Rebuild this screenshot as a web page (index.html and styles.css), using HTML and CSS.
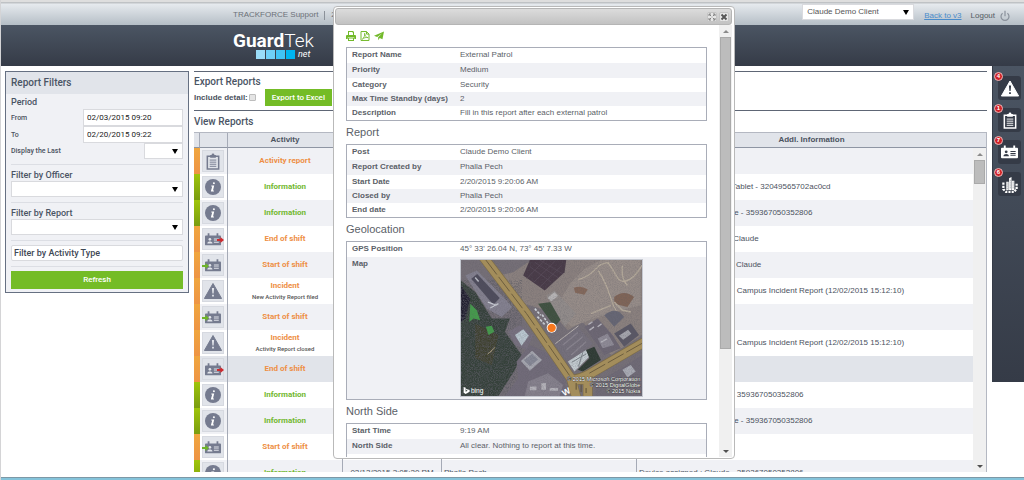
FILE: index.html
```
<!DOCTYPE html>
<html lang="en">
<head>
<meta charset="UTF-8">
<title>GuardTek.net - Reports</title>
<link rel="stylesheet" href="styles.css">
</head>
<body>

<!-- icons -->
<svg class="defs" aria-hidden="true">
	<symbol id="i-clip" viewBox="0 0 16 18">
		<path d="M2 3.5h12V17H2z" fill="none" stroke="currentColor" stroke-width="1.6"/>
		<path d="M5 2h1.5a1.5 1.5 0 0 1 3 0H11v3H5z" fill="currentColor"/>
		<path d="M4.5 7.5h7M4.5 9.7h7M4.5 11.9h7M4.5 14.1h7" stroke="currentColor"/>
	</symbol>
	<symbol id="i-info" viewBox="0 0 16 16">
		<circle cx="8" cy="8" r="8" fill="currentColor"/>
		<path d="M9.1 3.2a1 1 0 1 1-.6 1.9 1 1 0 0 1 .6-1.9zM6.4 6.6h2.8l-1.2 5h1l-.1.8H5.9l.1-.7 1.2-4.2h-1z" fill="#fff"/>
	</symbol>
	<symbol id="i-warn" viewBox="0 0 18 16">
		<path d="M9 .5 17.6 15.5H.4z" fill="currentColor" stroke="currentColor" stroke-linejoin="round"/>
		<path class="cut" d="M7.9 5h2.2l-.5 5.6H8.4zM8.1 11.8h1.8v1.8H8.1z"/>
	</symbol>
	<symbol id="i-card" viewBox="0 0 18 14">
		<path d="M1 2.500h16a1 1 0 0 1 1 1v9a1 1 0 0 1-1 1H1a1 1 0 0 1-1-1v-9a1 1 0 0 1 1-1z" fill="currentColor"/>
		<path d="M3 0h2v4H3zM13 0h2v4h-2z" fill="currentColor"/>
		<circle class="cut" cx="5.5" cy="6.800" r="1.500"/>
		<path class="cut" d="M2.600 11.400c0-3 5.800-3 5.800 0zM10 6h5.500v1H10zM10 8h5.500v1H10zM10 10h5.500v1H10z"/>
	</symbol>
	<symbol id="i-out" viewBox="0 0 7 6">
		<path d="M0 2h3.4V0L7 3 3.400 6V4H0z" fill="currentColor"/>
	</symbol>
	<symbol id="i-city" viewBox="0 0 18 18">
		<path d="M5 6h2.600v9H5zM8 2.500 10.600 1v14H8zM11 5h2.600v10H11z" fill="currentColor"/>
		<path d="M6 7v7M9.300 4v10M12.300 6v8" stroke="#383f4a" stroke-width=".6" stroke-dasharray="1"/>
		<path d="M2 7v7l3 3h8l3-3V7" fill="none" stroke="currentColor" stroke-width="2.400" stroke-dasharray="2.200 1.200"/>
	</symbol>
</svg>

<header class="topbar">
	<div class="account">
		<span>TRACKFORCE Support</span>
		<span class="sep"></span>
		<span>2/20/2015</span>
	</div>
	<select class="client" aria-label="Client"><option>Claude Demo Client</option></select>
	<a class="back" href="#">Back to v3</a>
	<a class="logout" href="#">Logout
		<svg viewBox="0 0 10 12"><path d="M2.600 3.200a4 4 0 1 0 4.800 0M5 .8v5.400" fill="none" stroke="#8a919b" stroke-width="1.200"/></svg>
	</a>
</header>

<div class="brand">
	<div class="logo">
		<div class="logo-name"><b>Guard</b>Tek</div>
		<div class="logo-sub"><i class="sq1"></i><i class="sq2"></i><i class="sq3"></i><i class="sq4"></i><em>net</em></div>
	</div>
</div>

<div class="page">
	<form class="filters">
		<h2>Report Filters</h2>
		<div class="fields">
			<h3>Period</h3>
			<div class="row"><label for="from">From</label><input type="text" id="from" value="02/03/2015 09:20"></div>
			<div class="row"><label for="to">To</label><input type="text" id="to" value="02/20/2015 09:22"></div>
			<div class="row"><label for="last">Display the Last</label><select id="last"><option></option></select></div>
			<hr>
			<label class="title" for="officer">Filter by Officer</label>
			<select id="officer"><option></option></select>
			<hr>
			<label class="title" for="report">Filter by Report</label>
			<select id="report"><option></option></select>
			<hr>
			<input type="text" class="type" aria-label="Filter by Activity Type" value="Filter by Activity Type">
			<hr>
			<button type="button" class="green">Refresh</button>
		</div>
	</form>

	<main class="reports">
		<section class="export">
			<h2>Export Reports</h2>
			<div class="export-row">
				<label for="detail">Include detail:</label>
				<input type="checkbox" id="detail">
				<button type="button" class="green">Export to Excel</button>
			</div>
		</section>
		<h2 class="view">View Reports</h2>
		<div class="grid">
			<table>
				<colgroup><col class="c-bar"><col class="c-icon"><col class="c-act"><col class="c-date"><col class="c-who"><col></colgroup>
				<thead>
					<tr><th></th><th></th><th>Activity</th><th>Date</th><th>Officer</th><th>Addl. Information</th></tr>
				</thead>
				<tbody>
					<tr class="orange"><td></td><td><span class="tile"><svg class="clip"><use href="#i-clip"/></svg></span></td><td>Activity report</td><td></td><td></td><td></td></tr>
					<tr class="lime"><td></td><td><span class="tile"><svg><use href="#i-info"/></svg></span></td><td>Information</td><td></td><td></td><td>Device assigned : Claude Tablet - 32049565702ac0cd</td></tr>
					<tr class="lime"><td></td><td><span class="tile"><svg><use href="#i-info"/></svg></span></td><td>Information</td><td></td><td></td><td>Device unassigned : Claude - 359367050352806</td></tr>
					<tr class="orange"><td></td><td><span class="tile"><svg class="card"><use href="#i-card"/></svg><svg class="out"><use href="#i-out"/></svg></span></td><td>End of shift</td><td></td><td></td><td>End of shift on the device: Claude</td></tr>
					<tr class="orange"><td></td><td><span class="tile"><svg class="card"><use href="#i-card"/></svg><svg class="in"><use href="#i-out"/></svg></span></td><td>Start of shift</td><td></td><td></td><td>Start of shift on the device: Claude</td></tr>
					<tr class="orange"><td></td><td><span class="tile"><svg><use href="#i-warn"/></svg></span></td><td>Incident<small>New Activity Report filed</small></td><td></td><td></td><td>Campus Incident Report : - Campus Incident Report (12/02/2015 15:12:10)</td></tr>
					<tr class="orange"><td></td><td><span class="tile"><svg class="card"><use href="#i-card"/></svg><svg class="in"><use href="#i-out"/></svg></span></td><td>Start of shift</td><td></td><td></td><td></td></tr>
					<tr class="orange"><td></td><td><span class="tile"><svg><use href="#i-warn"/></svg></span></td><td>Incident<small>Activity Report closed</small></td><td></td><td></td><td>Campus Incident Report : - Campus Incident Report (12/02/2015 15:12:10)</td></tr>
					<tr class="orange selected"><td></td><td><span class="tile"><svg class="card"><use href="#i-card"/></svg><svg class="out"><use href="#i-out"/></svg></span></td><td>End of shift</td><td></td><td></td><td></td></tr>
					<tr class="lime"><td></td><td><span class="tile"><svg><use href="#i-info"/></svg></span></td><td>Information</td><td></td><td></td><td>Device assigned : Claude - 359367050352806</td></tr>
					<tr class="lime"><td></td><td><span class="tile"><svg><use href="#i-info"/></svg></span></td><td>Information</td><td></td><td></td><td>Device unassigned : Claude - 359367050352806</td></tr>
					<tr class="orange"><td></td><td><span class="tile"><svg class="card"><use href="#i-card"/></svg><svg class="in"><use href="#i-out"/></svg></span></td><td>Start of shift</td><td></td><td></td><td></td></tr>
					<tr class="lime"><td></td><td><span class="tile"><svg><use href="#i-info"/></svg></span></td><td>Information</td><td>02/13/2015 3:05:20 PM</td><td>Phalla Pech</td><td>Device assigned : Claude - 359367050352806</td></tr>
				</tbody>
			</table>
			<div class="scroll"><i class="up"></i><i class="thumb"></i><i class="down"></i></div>
		</div>
	</main>

	<nav class="dock">
		<a href="#" aria-label="Incidents"><svg><use href="#i-warn"/></svg><b>4</b></a>
		<a href="#" aria-label="Activity reports"><svg><use href="#i-clip"/></svg><b>1</b></a>
		<a href="#" aria-label="Shifts"><svg class="card"><use href="#i-card"/></svg><b>7</b></a>
		<a href="#" aria-label="Posts"><svg><use href="#i-city"/></svg><b>6</b></a>
	</nav>
</div>
<div class="taskbar"></div>

<div class="dialog" role="dialog" aria-label="Report">
	<div class="titlebar">
		<button type="button" aria-label="Maximize"><svg viewBox="0 0 8 8"><path d="M1 3V1h2M5 1h2v2M7 5v2H5M3 7H1V5M1.400 1.400l1.800 1.800M6.600 1.400 4.800 3.200M6.600 6.600 4.800 4.800M1.400 6.600l1.800-1.800" fill="none" stroke="#777" stroke-width=".9"/></svg></button>
		<button type="button" aria-label="Close"><svg viewBox="0 0 8 8"><path d="M1.500 1.500l5 5M6.500 1.500l-5 5" stroke="#555" stroke-width="1.900"/></svg></button>
	</div>
	<div class="dialog-main">
		<div class="content">
			<div class="tools">
				<button type="button" aria-label="Print"><svg viewBox="0 0 10 10"><path d="M2 0h5l1 1v3H2zM0 5q0-1 1-1h8q1 0 1 1v3H8.300V6.500H1.700V8H0zM2 7h6v3H2z" fill="#72b92a"/><path d="M3 1h3.600v1H7v2H3zM3 7.600h4V9H3z" fill="#fff"/></svg></button>
				<button type="button" aria-label="Save as PDF"><svg viewBox="0 0 10 11"><path d="M.6.6h6l2.800 2.800v7H.6zM6.600.6v2.800h2.800" fill="none" stroke="#72b92a" stroke-width="1.100"/><path d="M2 9c2-1.500 3-4 2.600-6.500C5 5.500 6 7 8.400 7.300 6 6.800 4 7.400 2 9z" fill="none" stroke="#72b92a" stroke-width=".9"/></svg></button>
				<button type="button" aria-label="Send"><svg viewBox="0 0 11 10"><path d="M11 0 9.300 8.500 6.300 7.200 4.600 9.600V6.500L9 2 3.500 6 0 4.700z" fill="#72b92a"/></svg></button>
			</div>
			<table>
				<tr><th>Report Name</th><td>External Patrol</td></tr>
				<tr><th>Priority</th><td>Medium</td></tr>
				<tr><th>Category</th><td>Security</td></tr>
				<tr><th>Max Time Standby (days)</th><td>2</td></tr>
				<tr><th>Description</th><td>Fill in this report after each external patrol</td></tr>
			</table>
			<h2>Report</h2>
			<table>
				<tr><th>Post</th><td>Claude Demo Client</td></tr>
				<tr><th>Report Created by</th><td>Phalla Pech</td></tr>
				<tr><th>Start Date</th><td>2/20/2015 9:20:06 AM</td></tr>
				<tr><th>Closed by</th><td>Phalla Pech</td></tr>
				<tr><th>End date</th><td>2/20/2015 9:20:06 AM</td></tr>
			</table>
			<h2>Geolocation</h2>
			<table>
				<tr><th>GPS Position</th><td>45° 33' 26.04 N, 73° 45' 7.33 W</td></tr>
				<tr class="map-row"><th>Map</th><td>
					<svg class="map" viewBox="17 13 547 411" preserveAspectRatio="none">
						<filter id="rough" x="0" y="0" width="100%" height="100%">
							<feTurbulence type="fractalNoise" baseFrequency=".35" numOctaves="3" seed="4"/>
							<feColorMatrix values="0 0 0 0 .1  0 0 0 0 .1  0 0 0 0 .12  1.6 0 0 0 -.6"/>
						</filter>
						<!-- ground -->
						<rect x="17" y="13" width="547" height="411" fill="#756f77"/>
						<path d="M230 13H564V240L470 300 420 240 385 200 340 225 290 170 225 150 190 150 130 60 175 50z" fill="#8a807e"/>
						<path d="M350 80 390 40 440 13H560V150L480 170 420 190 350 215 300 160z" fill="#968c88"/>
						<path d="M17 75 60 110 110 190 165 190 150 230 200 300 180 345 130 424H17z" fill="#35413a"/>
						<path d="M17 90 45 130 30 190 17 200z" fill="#211f30"/>
						<path d="M60 205 130 240 110 330 60 310z" fill="#3f412f"/>
						<path d="M17 75 60 110 110 190 165 190 150 230 200 300 180 345 130 424H17z" filter="url(#rough)"/>
						<path d="M45 145 65 165 75 195 55 190 42 200zM92 215 110 212 118 230 100 240z" fill="#459a4c"/>
						<path d="M97 298 120 277M110 288 100 295" stroke="#a1957a" stroke-width="3"/>
						<!-- diggings and tracks -->
						<path d="M480 125q30-25 60 0l-20 30-40-10z" fill="#7f6457"/>
						<path d="M358 97q22-8 42 5l-10 16-28-6z" fill="#83685b"/>
						<path d="M450 180q35-30 60 5l-30 30z" fill="#666674"/>
						<path d="M372 72q30-8 50-30t40-20q8 10 25 40t50 2q20-20 27-35M432 45q20 30 35 75t20 45M505 30q-5 40 15 60M470 150 410 175" fill="none" stroke="#b5aa9b" stroke-width="4"/>
						<path d="M480 140l25 25 25 5" fill="none" stroke="#b5aa9b" stroke-width="5"/>
						<!-- buildings -->
						<path d="M225 13H335L330 50 270 105 205 60z" fill="#483a47"/>
						<path d="M225 33 290 80M240 20 310 66M255 13 325 55M215 70 270 13M235 82 300 18M255 95 320 30" stroke="#5f5161" stroke-width="1.500"/>
						<path d="M30 60 65 45 150 130 172 155 140 185 95 160z" fill="#83808f"/>
						<path d="M48 70 66 55 134 128 115 148z" fill="#4e4c5c"/>
						<path d="M60 66 70 78M98 140 125 150M105 158 130 145" stroke="#c5c7d0" stroke-width="4"/>
						<path d="M160 230 195 210 235 240 215 285 180 270z" fill="#77707f"/>
						<path d="M180 240 205 222 222 242 200 272z" fill="#b9c6cf"/>
						<path d="M185 320 225 270 290 300 330 345 335 424H150L190 370z" fill="#716b79"/>
						<path d="M198 318 232 287 262 315 225 348z" fill="#a5a6af"/>
						<path d="M207 316 232 296 250 314 225 334z" fill="#868896"/>
						<path d="M220 380 280 355 325 390 315 424H210z" fill="#85808c"/>
						<path d="M225 395h20v12h-20zM260 385h14v20h-14zM285 400h25v8h-25z" fill="#b3b1b8"/>
						<path d="M300 268 370 215 415 265 345 330z" fill="#75707c"/>
						<path d="M325 270 370 232M335 285 385 245M350 300 395 260" stroke="#8a8590" stroke-width="4"/>
						<path d="M302 266 372 212" stroke="#b9b3b0" stroke-width="3"/>
						<path d="M340 320 395 285 405 305 360 350z" fill="#c2cacf"/>
						<path d="M352 322 395 297M385 292 372 335" stroke="#7b8288" stroke-width="3"/>
						<path d="M395 285 420 275 440 315 385 350 370 345 405 310z" fill="#2f3b34"/>
						<path d="M390 215 430 190 475 240 500 280 450 300z" fill="#6d6774"/>
						<path d="M480 235 530 205 555 240 510 275z" fill="#595765"/>
						<path d="M494 242 522 224 532 236 507 254z" fill="#a4a5ad"/>
						<path d="M430 250 460 235 480 270 445 280z" fill="#8e8a96"/>
						<path d="M402 208l12-8M405 225l14-10M430 215l12-9M440 262l18-11" stroke="#b7b5bd" stroke-width="4"/>
						<path d="M495 345 564 300V424H420L430 380z" fill="#6f6a76"/>
						<path d="M505 345 530 330 545 350 520 368z" fill="#a9abb4"/>
						<path d="M250 145 290 140 325 185 300 215z" fill="#3f5140"/>
						<path d="M275 120 300 105 365 175 330 215z" fill="#918b8a"/>
						<path d="M278 128 300 110 310 122 290 138z" fill="#b5b3b4"/>
						<path d="M240 160 258 180M248 184 270 208M262 178 285 212" stroke="#d2d7dd" stroke-width="5" stroke-dasharray="8 4"/>
						<rect x="17" y="13" width="547" height="411" filter="url(#rough)" opacity=".35"/>
						<!-- roads -->
						<path d="M85 5 215 175 350 372 366 430M350 376Q380 372 405 358L570 262M345 376 400 374V430" fill="none" stroke="#7d6d49" stroke-width="30"/>
						<path d="M85 5 215 175 350 372 366 430M350 376Q380 372 405 358L570 262M345 376 400 374V430" fill="none" stroke="#a38d5b" stroke-width="26"/>
						<path d="M92 13 215 175 345 362M405 355 564 265" fill="none" stroke="#6c5d3e" stroke-width="3" stroke-dasharray="55 9"/>
						<path d="M365 385v20M380 390v22M395 400v15" stroke="#5f5136" stroke-width="3"/>
						<circle cx="291" cy="218" r="15" fill="#fff"/>
						<circle cx="291" cy="218" r="12.500" fill="#f6781d"/>
						<path d="M25 397 31 399V411L37 408 33 406 31 402 43 406V411L31 418 25 414z" fill="#fff"/>
						<text x="47" y="415" class="bing">bing</text>
						<text x="322" y="420" class="west" transform="rotate(-28 334 410)">W</text>
						<g class="copy" text-anchor="end">
							<text x="559" y="379">© 2015 Microsoft Corporation</text>
							<text x="559" y="397">© 2015 DigitalGlobe</text>
							<text x="559" y="415">© 2015 Nokia</text>
						</g>
					</svg>
				</td></tr>
			</table>
			<h2>North Side</h2>
			<table>
				<tr><th>Start Time</th><td>9:19 AM</td></tr>
				<tr><th>North Side</th><td>All clear. Nothing to report at this time.</td></tr>
				<tr><th>End Time</th><td>10:20 AM</td></tr>
			</table>
		</div>
		<div class="scroll"><i class="up"></i><i class="thumb"></i><i class="down"></i></div>
	</div>
</div>
</body>
</html>
```
FILE: styles.css
```
* {
	box-sizing: border-box;
}
body {
	margin: 0;
	height: 100vh;
	display: flex;
	flex-direction: column;
	overflow: hidden;
	position: relative;
	border-left: 1px solid #d4d4d6;
	background: #fff;
	color: #4b5260;
	font: 8px/12px "Liberation Sans", Arial, sans-serif;
}
h2, h3 {
	margin: 0;
	font-family: Roboto, sans-serif;
	font-weight: 500;
	font-size: 10px;
	line-height: 14px;
	color: #4a5464;
}
h3 {
	font-size: 9px;
	line-height: 13px;
}
input, select, button {
	font: inherit;
	color: inherit;
	margin: 0;
	padding: 0;
	border-radius: 0;
}
input[type=text], select {
	border: 1px solid #d9dade;
	background-color: #fff;
	color: #222;
}
select {
	appearance: none;
	background: #fff url("data:image/svg+xml,%3Csvg xmlns='http://www.w3.org/2000/svg' width='6' height='5'%3E%3Cpath d='M0 0h6L3 5z'/%3E%3C/svg%3E") no-repeat right 4px center;
}
.defs {
	position: absolute;
	width: 0;
	height: 0;
}
.cut {
	fill: var(--cut, #e1e4ea);
}
.green {
	border: 0;
	background: #74bc26;
	color: #fff;
	font-family: Roboto, sans-serif;
	font-weight: 500;
}

/* header */
.topbar {
	flex: none;
	height: 25px;
	display: flex;
	align-items: center;
	padding: 3px 14px 0 232px;
	border-top: 2px solid #dedede;
	background: linear-gradient(#bfc2c5 1px, #e6eaee 2px, #b5bec6);
	color: #6b7178;
}
.account {
	display: flex;
	gap: 6px;
	flex: 1;
}
.sep {
	border-left: 1px solid #8b9199;
	height: 9px;
	align-self: center;
}
.client {
	width: 112px;
	height: 16px;
	padding-left: 4px;
	align-self: flex-start;
	margin-top: -1px;
	color: #555;
}
.back {
	margin: 2px 9px 0 10px;
	color: #4a8ccb;
}
.logout {
	display: flex;
	gap: 5px;
	margin-top: 2px;
	color: #555b63;
	text-decoration: none;
}
.logout svg {
	width: 10px;
	height: 12px;
}
.brand {
	flex: none;
	height: 41px;
	padding: 6px 0 0 232px;
	background: linear-gradient(#4b5563, #353b47);
}
.logo {
	width: 80px;
	color: #fff;
	font-family: Roboto, sans-serif;
}
.logo-name {
	font-size: 19px;
	line-height: 20px;
	font-weight: 300;
}
.logo-name b {
	font-weight: 700;
}
.logo-sub {
	display: flex;
	gap: 1px;
	padding-left: 23px;
	margin-top: -1px;
}
.logo-sub i {
	width: 9px;
	height: 9px;
}
.sq1 { background: #9adcf8; }
.sq2 { background: #6fd0f7; }
.sq3 { background: #41c4f5; }
.sq4 { background: #00b5f0; }
.logo-sub em {
	font-size: 9px;
	line-height: 9px;
	padding-left: 2px;
}

/* page */
.page {
	flex: 1;
	min-height: 0;
	display: flex;
	align-items: flex-start;
	gap: 5px;
	padding-left: 4px;
}
.filters {
	width: 184px;
	margin-top: 5px;
	border: 1px solid #667082;
	background: #f0f1f5;
}
.filters h2 {
	padding: 4px 5px;
	background: #e1e4ea;
}
.fields {
	padding: 2px 5px 3px;
}
.row {
	display: flex;
	justify-content: space-between;
	align-items: center;
	font: 500 7px/12px Roboto, sans-serif;
}
.row input {
	width: 100px;
	height: 17px;
	padding: 0 3px;
	font-size: 8px;
	font-weight: normal;
}
.row select {
	width: 39px;
	height: 16px;
}
.fields hr {
	margin: 5px 0 4px;
	border: 0;
	border-top: 1px solid #dcdee4;
}
.title, .type {
	display: block;
	font: 500 9px/12px Roboto, sans-serif;
	color: #4a5464;
}
.fields > select {
	width: 100%;
	height: 16px;
	display: block;
}
input.type {
	width: 100%;
	height: 16px;
	font: 500 9px/12px Roboto, sans-serif;
	border-radius: 2px;
	padding-left: 2px;
	color: #3f4856;
}
.fields .green {
	width: 100%;
	height: 18px;
	display: block;
}

.reports {
	flex: 1;
	min-width: 0;
	height: 100%;
	display: flex;
	flex-direction: column;
	padding: 5px 0;
}
.export {
	border-top: 1px solid #5e6675;
	border-bottom: 1px solid #5e6675;
	padding: 3px 0 4px;
	flex: none;
}
.export-row {
	display: flex;
	align-items: center;
	height: 17px;
	font-weight: bold;
}
.export-row input {
	appearance: none;
	width: 7px;
	height: 7px;
	margin: 0 9px 0 1px;
	border: 1px solid #bdbdbd;
	border-radius: 1px;
	background: #e4e4e4;
}
.export-row .green {
	width: 67px;
	height: 17px;
}
.view {
	flex: none;
	padding: 4px 0 3px;
}
.grid {
	position: relative;
	flex: 1;
	min-height: 0;
	overflow: hidden;
	border: 1px solid #b4b8c2;
	border-width: 1px 1px 0 0;
}
.grid table {
	width: 100%;
	table-layout: fixed;
	border-collapse: separate;
	border-spacing: 0;
}
.c-bar { width: 6px; }
.c-icon { width: 28px; }
.c-act { width: 115px; }
.c-date { width: 99px; }
.c-who { width: 195px; }
.grid th {
	height: 15px;
	padding: 0;
	background: #e1e4ea;
	border-right: 1px solid #a5aab6;
	border-bottom: 1px solid #8e95a3;
}
.grid th:last-child {
	border-right: 0;
}
.grid td {
	height: 26px;
	padding: 0 2px;
	border-right: 1px solid #a5aab6;
	white-space: nowrap;
}
.grid td:first-child, .grid td:last-child {
	border-right: 0;
}
.grid tbody tr:nth-child(odd) {
	background: #f0f1f5;
}
.grid tbody tr.selected {
	background: #e1e4ea;
}
.grid td:nth-child(3) {
	text-align: center;
	font-family: Roboto, sans-serif;
	font-weight: 700;
}
.grid td:nth-child(4) {
	text-align: center;
}
.orange td:first-child {
	background: linear-gradient(#f0a63e, #ee9445);
}
.lime td:first-child {
	background: linear-gradient(#9fc50a, #7a9c10);
}
.orange td:nth-child(3) { color: #ee8f45; }
.lime td:nth-child(3) { color: #72b830; }
.grid small {
	display: block;
	font-size: 6px;
	font-weight: 500;
	line-height: 10px;
	color: #555;
}
.tile {
	position: relative;
	display: flex;
	align-items: center;
	justify-content: center;
	width: 22px;
	height: 22px;
	background: #e1e4ea;
	border: 1px solid #d6d9e0;
	color: #757b8f;
}
.tile svg {
	width: 18px;
	height: 16px;
}
.tile .clip {
	height: 17px;
}
.tile .card {
	width: 16px;
	height: 13px;
}
.tile .out, .tile .in {
	position: absolute;
	width: 7px;
	height: 6px;
	top: 8px;
}
.tile .out {
	right: -1px;
	color: #cf2a2e;
}
.tile .in {
	left: -1px;
	color: #6fb52a;
}

/* scrollbars */
.scroll {
	display: flex;
	flex-direction: column;
	align-items: center;
	width: 13px;
	background: #f0f0f0;
}
.scroll .up, .scroll .down {
	border: 3px solid transparent;
}
.scroll .up {
	border-top: 0;
	border-bottom-color: #8b8b8b;
	margin: 5px 0 4px;
}
.scroll .down {
	border-bottom: 0;
	border-top-color: #505050;
	margin: auto 0 4px;
}
.scroll .thumb {
	width: 11px;
	background: #bcbcbc;
	border: 1px solid #aaa;
}
.grid .scroll {
	position: absolute;
	top: 15px;
	right: 0;
	bottom: 0;
}
.grid .thumb {
	height: 24px;
}

.dock {
	--cut: #353b47;
	width: 32px;
	min-height: 316px;
	padding: 10px 3px 0 5px;
	display: flex;
	flex-direction: column;
	gap: 8px;
	background: linear-gradient(#4b5563, #353b47);
	border-left: 1px solid #353b47;
}
.dock a {
	position: relative;
	display: flex;
	align-items: center;
	justify-content: center;
	height: 24px;
	border-radius: 3px;
	background: #353b47;
	color: #fff;
}
.dock svg {
	width: 18px;
	height: 17px;
}
.dock .card {
	width: 17px;
	height: 14px;
}
.dock b {
	position: absolute;
	left: -4px;
	top: -4px;
	width: 9px;
	height: 9px;
	border: 1px solid #e9b9ba;
	border-radius: 50%;
	background: #cf2127;
	font-size: 6px;
	line-height: 7px;
	text-align: center;
}
.taskbar {
	flex: none;
	height: 3px;
	background: #85c3da;
	border-top: 1px solid #7d98a6;
}

/* report window */
.dialog {
	position: absolute;
	left: 332px;
	top: 6px;
	bottom: 21px;
	width: 402px;
	display: flex;
	flex-direction: column;
	padding: 1px 2px 1px 1px;
	border: 1px solid #b9b9b9;
	border-radius: 4px;
	background: #fff;
}
.titlebar {
	flex: none;
	height: 17px;
	display: flex;
	justify-content: flex-end;
	align-items: center;
	gap: 2px;
	padding-right: 2px;
	border: 1px solid #b5b5b5;
	border-radius: 3px;
	background: linear-gradient(#dcdcdc, #c2c2c2);
}
.titlebar button {
	width: 10px;
	height: 10px;
	display: flex;
	align-items: center;
	justify-content: center;
	border: 1px solid #c4c4c4;
	border-radius: 2px;
	background: #e6e6e6;
}
.titlebar svg {
	flex: none;
	width: 8px;
	height: 8px;
}
.dialog-main {
	flex: 1;
	min-height: 0;
	display: flex;
}
.content {
	flex: 1;
	min-width: 0;
	overflow: hidden;
	padding: 6px 12px 0 11px;
	color: #5b5f68;
}
.tools {
	display: flex;
	gap: 4px;
	height: 16px;
}
.tools button {
	height: 10px;
	border: 0;
	background: none;
}
.tools svg {
	display: block;
	width: 10px;
	height: 10px;
}
.content h2 {
	font-family: inherit;
	font-size: 11px;
	font-weight: normal;
	line-height: 23px;
	color: #5b5f68;
}
.content table {
	width: 100%;
	border: 1px solid #a9adb8;
	border-collapse: separate;
	border-spacing: 0;
}
.content th {
	width: 108px;
	text-align: left;
}
.content th, .content td {
	padding: 1px 6px 1px 5px;
	vertical-align: top;
}
.content tr:nth-child(-n+2) > * {
	padding-bottom: 2px;
}
.content tr:nth-child(even) {
	background: #f0f1f5;
}
.map {
	display: block;
	width: 183px;
	height: 138px;
	margin-top: 1px;
	border: 1px solid #c5c8d0;
}
.bing {
	font-size: 20px;
	fill: #fff;
}
.west {
	font-size: 26px;
	font-weight: bold;
	fill: #fff;
}
.copy {
	font-size: 17px;
	fill: #fff;
	stroke: #333;
	stroke-width: 2px;
	paint-order: stroke;
}
.dialog .thumb {
	flex: 0 1 312px;
}
```
